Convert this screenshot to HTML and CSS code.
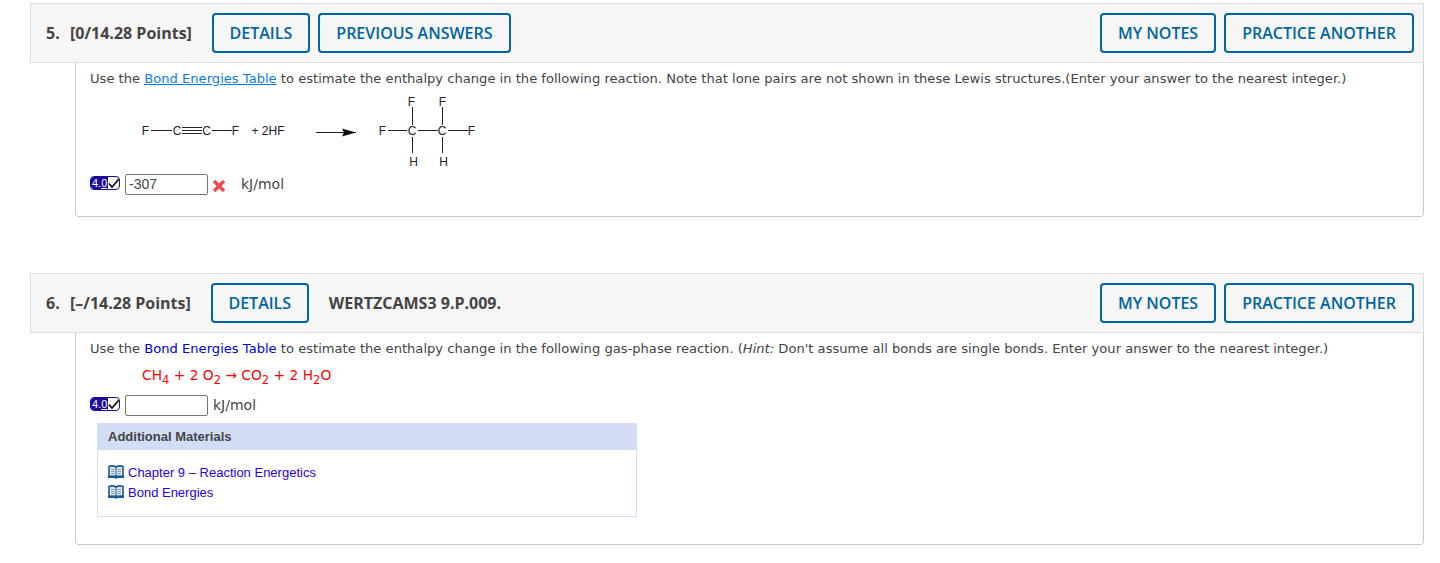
FILE: index.html
```html
<!DOCTYPE html>
<html lang="en">
<head>
    <meta charset="UTF-8">
    <meta name="viewport" content="width=device-width, initial-scale=1.0">
    <title>Assignment Questions</title>
    <link rel="stylesheet" href="styles.css">
</head>
<body>

    <svg class="defs" width="0" height="0">
        <symbol id="book" viewBox="0 0 16 14">
            <path d="M1 1.500Q4.500 0 8 2Q11.500 0 15 1.500V11.500H1z" fill="#dfe8ee" stroke="#1a5a94" stroke-width="1.600"/>
            <path d="M0 10.500h16V13H9.500L8 14 6.500 13H0z" fill="#1a5a94"/>
            <path d="M8 2v9" stroke="#1a5a94"/>
            <path d="M3 4.500h3.500M3 6.500h3.500M3 8.500h3.500M9.500 4.500H13M9.500 6.500H13M9.500 8.500H13" stroke="#8c9aa5"/>
        </symbol>
        <symbol id="check" viewBox="0 0 12 10">
            <path d="M1 5.500l3 3.500L11 1" fill="none" stroke="#111" stroke-width="1.800"/>
        </symbol>
    </svg>

    <section class="question">
        <div class="q-header">
            <span class="q-num">5.</span>
            <span class="q-points">[0/14.28 Points]</span>
            <button class="btn first">DETAILS</button>
            <button class="btn btn-prev">PREVIOUS ANSWERS</button>
            <span class="spacer"></span>
            <button class="btn">MY NOTES</button>
            <button class="btn">PRACTICE ANOTHER</button>
        </div>
        <div class="q-body q-body-5">
            <p class="q-text">Use the <a class="link-blue" href="#">Bond Energies Table</a> to estimate the enthalpy change in the following reaction. Note that lone pairs are not shown in these Lewis structures.(Enter your answer to the nearest integer.)</p>
            <svg class="reaction" width="400" height="76" viewBox="0 0 400 76">
                <g class="atoms">
                    <text x="55.500" y="40">F</text>
                    <text x="87" y="40">C</text>
                    <text x="116.500" y="40">C</text>
                    <text x="145.500" y="40">F</text>
                    <text x="178" y="39.500">+ 2HF</text>
                    <text x="292.500" y="40">F</text>
                    <text x="321.500" y="10.500">F</text>
                    <text x="352.500" y="10.500">F</text>
                    <text x="322" y="40">C</text>
                    <text x="352" y="40">C</text>
                    <text x="381.500" y="40">F</text>
                    <text x="323.500" y="70.500">H</text>
                    <text x="353.500" y="70.500">H</text>
                </g>
                <g class="bonds">
                    <path d="M61 35.500h21M92 32.500h20M92 35.500h20M92 38.500h20M122 35.500h20"/>
                    <path d="M226 37.500h40"/>
                    <path d="M298 35.500h19M328 35.500h20M358 35.500h20"/>
                    <path d="M322.500 12v18M352.500 12v18M322.500 42v16M352.500 42v16"/>
                </g>
                <path class="arrow-head" d="M252 33.500l14 4-14 4 2-4z"/>
            </svg>
            <div class="answer-row">
                <span class="badge"><span class="badge-num">4.<u>0</u></span><svg class="check" width="12" height="10"><use href="#check"/></svg></span>
                <input class="answer" type="text" value="-307">
                <svg class="cross" width="14" height="14" viewBox="0 0 14 14"><path d="M2 2l10 10M12 2L2 12" stroke="#f04b55" stroke-width="3.600"/></svg>
                <span class="unit unit-wrong">kJ/mol</span>
            </div>
        </div>
    </section>

    <section class="question">
        <div class="q-header">
            <span class="q-num">6.</span>
            <span class="q-points">[&ndash;/14.28 Points]</span>
            <button class="btn first">DETAILS</button>
            <span class="q-title">WERTZCAMS3 9.P.009.</span>
            <span class="spacer"></span>
            <button class="btn">MY NOTES</button>
            <button class="btn">PRACTICE ANOTHER</button>
        </div>
        <div class="q-body q-body-6">
            <p class="q-text">Use the <a class="link-navy" href="#">Bond Energies Table</a> to estimate the enthalpy change in the following gas-phase reaction. (<em>Hint:</em> Don't assume all bonds are single bonds. Enter your answer to the nearest integer.)</p>
            <p class="equation">CH<sub>4</sub> + 2 O<sub>2</sub> &rarr; CO<sub>2</sub> + 2 H<sub>2</sub>O</p>
            <div class="answer-row">
                <span class="badge"><span class="badge-num">4.<u>0</u></span><svg class="check" width="12" height="10"><use href="#check"/></svg></span>
                <input class="answer" type="text">
                <span class="unit">kJ/mol</span>
            </div>
            <div class="materials">
                <div class="materials-head">Additional Materials</div>
                <ul class="materials-list">
                    <li><svg width="16" height="14"><use href="#book"/></svg><a href="#">Chapter 9 &ndash; Reaction Energetics</a></li>
                    <li><svg width="16" height="14"><use href="#book"/></svg><a href="#">Bond Energies</a></li>
                </ul>
            </div>
        </div>
    </section>

</body>
</html>
```

FILE: styles.css
```css
body {
    margin: 0;
    padding-top: 3px;
    background-color: #fff;
    font-family: "DejaVu Sans", sans-serif;
    color: #444;
}
.defs {
    display: block;
    height: 0;
}
.question {
    margin: 0 16px 56px 30px;
}
.question:last-child {
    margin-bottom: 0;
}
.q-header {
    display: flex;
    align-items: center;
    box-sizing: border-box;
    height: 60px;
    padding: 0 9px 0 15px;
    background-color: #f6f6f6;
    border: 1px solid #ddd;
    font-family: "Open Sans", sans-serif;
    font-weight: 600;
    font-size: 16px;
    color: #444;
}
.q-num {
    width: 24px;
    font-weight: 700;
}
.q-points {
    font-weight: 700;
}
.q-title {
    margin-left: 20px;
    font-weight: 700;
}
.spacer {
    flex: 1;
}
.btn {
    box-sizing: border-box;
    height: 40px;
    margin-left: 8px;
    padding: 0 16px;
    background: none;
    border: 2px solid #00659f;
    border-radius: 4px;
    font-family: "Open Sans", sans-serif;
    font-weight: 600;
    font-size: 16px;
    color: #00659f;
}
.first {
    width: 98px;
    margin-left: 20px;
    padding: 0;
}
.btn-prev {
    width: 193px;
    padding: 0;
}
.q-body {
    box-sizing: border-box;
    margin-left: 45px;
    padding: 0 14px;
    border: 1px solid #ccc;
    border-top: none;
    border-radius: 0 0 4px 4px;
}
.q-body-5 {
    height: 154px;
}
.q-body-6 {
    height: 212px;
}
.q-text {
    margin: 0;
    padding-top: 7px;
    font-size: 13.100px;
    line-height: 17px;
}
.link-blue {
    color: #0a7ce6;
}
.link-navy {
    color: #0000c8;
    text-decoration: none;
}
.reaction {
    display: block;
    margin-top: 8px;
    overflow: visible;
}
.atoms {
    font-family: "Liberation Sans", sans-serif;
    font-size: 12px;
    text-anchor: middle;
    fill: #222;
}
.bonds path {
    fill: none;
    stroke: #222;
    shape-rendering: crispEdges;
}
.arrow-head {
    fill: #111;
}
.answer-row {
    display: flex;
    align-items: center;
    height: 22px;
    margin-top: 2px;
    font-size: 14px;
}
.badge {
    display: inline-flex;
    align-items: center;
    box-sizing: border-box;
    width: 30px;
    height: 14px;
    margin-top: -3px;
    border: 1px solid #1c0a9c;
    border-radius: 4px;
    overflow: hidden;
    background-color: #fff;
}
.badge-num {
    padding: 0 1px;
    background-color: #1c0a9c;
    color: #fff;
    font-family: "Liberation Sans", sans-serif;
    font-size: 11px;
    line-height: 12px;
}
.check {
    flex: none;
}
.answer {
    box-sizing: border-box;
    width: 83px;
    height: 21px;
    margin-left: 5px;
    padding: 0 3px;
    border: 1px solid #767676;
    border-radius: 2px;
    font-family: "Liberation Sans", sans-serif;
    font-size: 14px;
    color: #444;
}
.cross {
    margin: 3px 0 0 4px;
}
.unit {
    margin-left: 5px;
}
.unit-wrong {
    margin-left: 15px;
}
.equation {
    margin: 8px 0 0 52px;
    color: #f00;
    font-size: 13.800px;
    line-height: 20px;
}
.equation sub {
    font-size: 11.500px;
    line-height: 0;
}
.q-body-6 .answer-row {
    margin-top: 9px;
}
.materials {
    width: 540px;
    box-sizing: border-box;
    margin: 7px 0 0 7px;
    border: 1px solid #d3ddf5;
    font-family: "Liberation Sans", sans-serif;
    font-size: 13px;
}
.materials-head {
    box-sizing: border-box;
    height: 26px;
    padding: 0 10px;
    background-color: #d3ddf5;
    font-weight: 700;
    line-height: 26px;
    color: #444;
}
.materials-list {
    list-style: none;
    margin: 0;
    padding: 12px 10px 14px;
}
.materials-list li {
    display: flex;
    align-items: center;
    gap: 4px;
    height: 20px;
}
.materials-list a {
    color: #2a00dc;
    text-decoration: none;
}
```
